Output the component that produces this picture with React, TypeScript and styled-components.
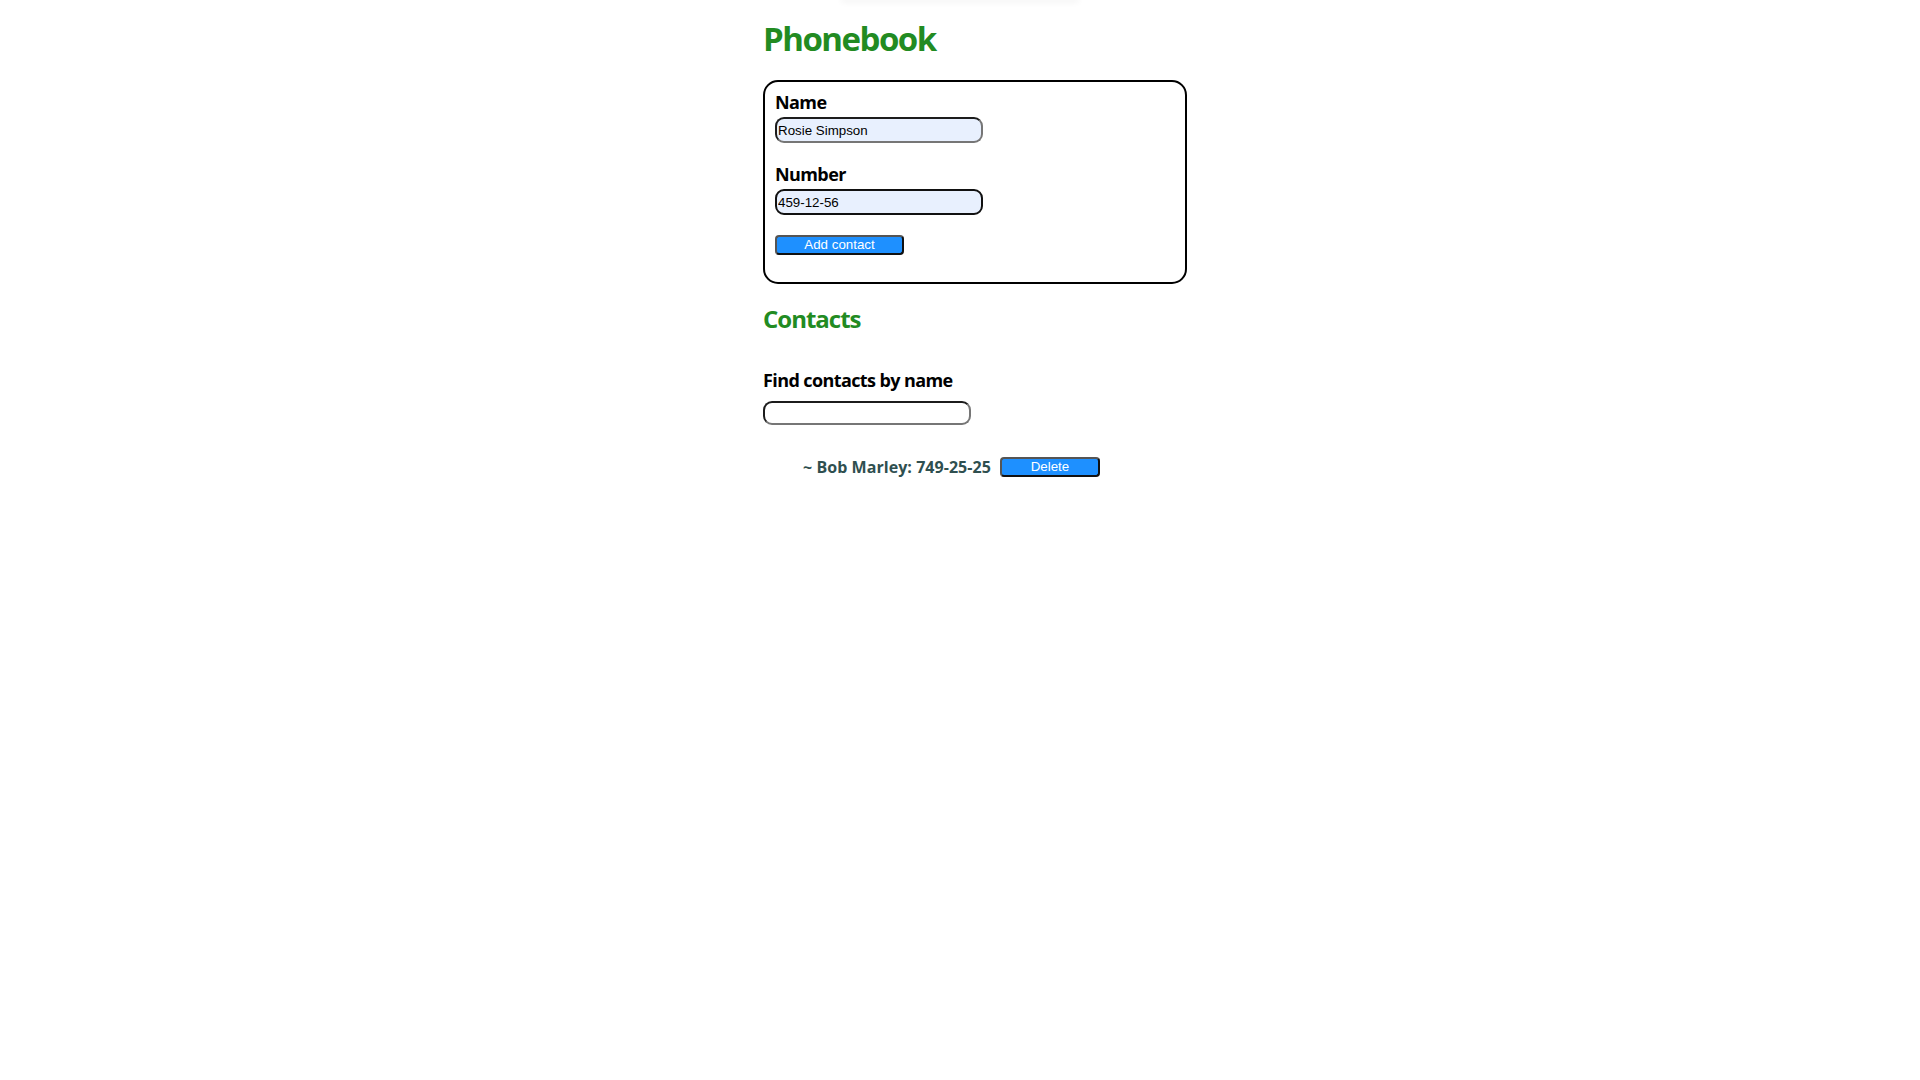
import React, { useState } from "react";
import styled, { createGlobalStyle } from "styled-components";

const GlobalStyle = createGlobalStyle`
  html, body {
    margin: 0;
    padding: 0;
    background: #ffffff;
  }
  body {
    font-family: "Open Sans", "Noto Sans", "Liberation Sans", sans-serif;
    color: #000;
  }
`;

const TopShade = styled.div`
  width: 234px;
  height: 0;
  margin: 0 auto;
  box-shadow: 0 0 6px 2px rgba(0, 0, 0, 0.06);
`;

const Page = styled.div`
  width: 394px;
  margin: 0 auto;
  padding-top: 19px;
`;

const Title = styled.h1`
  margin: 0;
  font-size: 33px;
  line-height: 40px;
  font-weight: 700;
  color: #228b22;
  letter-spacing: -1.5px;
`;

const SubTitle = styled.h2`
  margin: 20px 0 0;
  font-size: 24px;
  line-height: 30px;
  font-weight: 700;
  color: #228b22;
  letter-spacing: -1px;
`;

const FormBox = styled.form`
  box-sizing: border-box;
  width: 424px;
  margin-top: 21px;
  padding: 9px 10px 27px;
  border: 2px solid #000;
  border-radius: 15px;
  display: flex;
  flex-direction: column;
  align-items: flex-start;
`;

const Label = styled.label<{ $gap?: number }>`
  display: block;
  margin-top: ${(p) => p.$gap ?? 0}px;
  font-size: 18px;
  line-height: 22px;
  font-weight: 700;
  letter-spacing: -0.6px;
`;

const Input = styled.input<{ $filled?: boolean; $dark?: boolean; $gap?: number; $height?: number }>`
  box-sizing: border-box;
  display: block;
  width: 208px;
  height: ${(p) => p.$height ?? 26}px;
  margin: ${(p) => p.$gap ?? 4}px 0 0;
  padding: 0 1px;
  border-width: 2px;
  border-style: solid;
  border-color: ${(p) =>
    p.$dark ? "#111" : "#1c1c1c #767676 #767676 #1c1c1c"};
  border-radius: 9px;
  background: ${(p) => (p.$filled ? "#e8f0fe" : "#fff")};
  font-family: "Liberation Sans", Arial, sans-serif;
  font-size: 13.33px;
  color: #000;
  outline: none;
`;

const Button = styled.button<{ $width: number; $gap?: number }>`
  box-sizing: border-box;
  width: ${(p) => p.$width}px;
  height: 20px;
  margin-top: ${(p) => p.$gap ?? 0}px;
  padding: 0;
  border-width: 2px;
  border-style: solid;
  border-color: #555 #111 #111 #555;
  border-radius: 4px;
  background: #1e90ff;
  color: #fff;
  font-family: "Liberation Sans", Arial, sans-serif;
  font-size: 13.33px;
  line-height: 16px;
  cursor: pointer;
`;

const FindLabel = styled(Label)`
  margin-top: 35px;
`;

const List = styled.ul`
  margin: 32px 0 0;
  padding: 0 0 0 40px;
  list-style: none;
`;

const Item = styled.li`
  display: flex;
  align-items: center;
  gap: 9px;
  height: 20px;
`;

const ItemText = styled.span`
  font-size: 16px;
  line-height: 20px;
  font-weight: 700;
  color: #2f4f4f;
  letter-spacing: 0.05px;
`;

export default function App() {
  const [name, setName] = useState("Rosie Simpson");
  const [number, setNumber] = useState("459-12-56");
  const [filter, setFilter] = useState("");
  const contacts = [{ id: "1", name: "Bob Marley", number: "749-25-25" }];
  const visible = contacts.filter((c) =>
    c.name.toLowerCase().includes(filter.toLowerCase())
  );

  return (
    <>
      <GlobalStyle />
      <TopShade />
      <Page>
        <Title>Phonebook</Title>
        <FormBox onSubmit={(e) => e.preventDefault()}>
          <Label htmlFor="name">Name</Label>
          <Input
            id="name"
            $filled
            value={name}
            onChange={(e) => setName(e.target.value)}
          />
          <Label htmlFor="number" $gap={20}>
            Number
          </Label>
          <Input
            id="number"
            $filled
            $dark
            value={number}
            onChange={(e) => setNumber(e.target.value)}
          />
          <Button type="submit" $width={129} $gap={20}>
            Add contact
          </Button>
        </FormBox>
        <SubTitle>Contacts</SubTitle>
        <FindLabel htmlFor="filter">Find contacts by name</FindLabel>
        <Input
          id="filter"
          $gap={10}
          $height={24}
          value={filter}
          onChange={(e) => setFilter(e.target.value)}
        />
        <List>
          {visible.map((c) => (
            <Item key={c.id}>
              <ItemText>
                ~ {c.name}: {c.number}
              </ItemText>
              <Button type="button" $width={100}>
                Delete
              </Button>
            </Item>
          ))}
        </List>
      </Page>
    </>
  );
}
